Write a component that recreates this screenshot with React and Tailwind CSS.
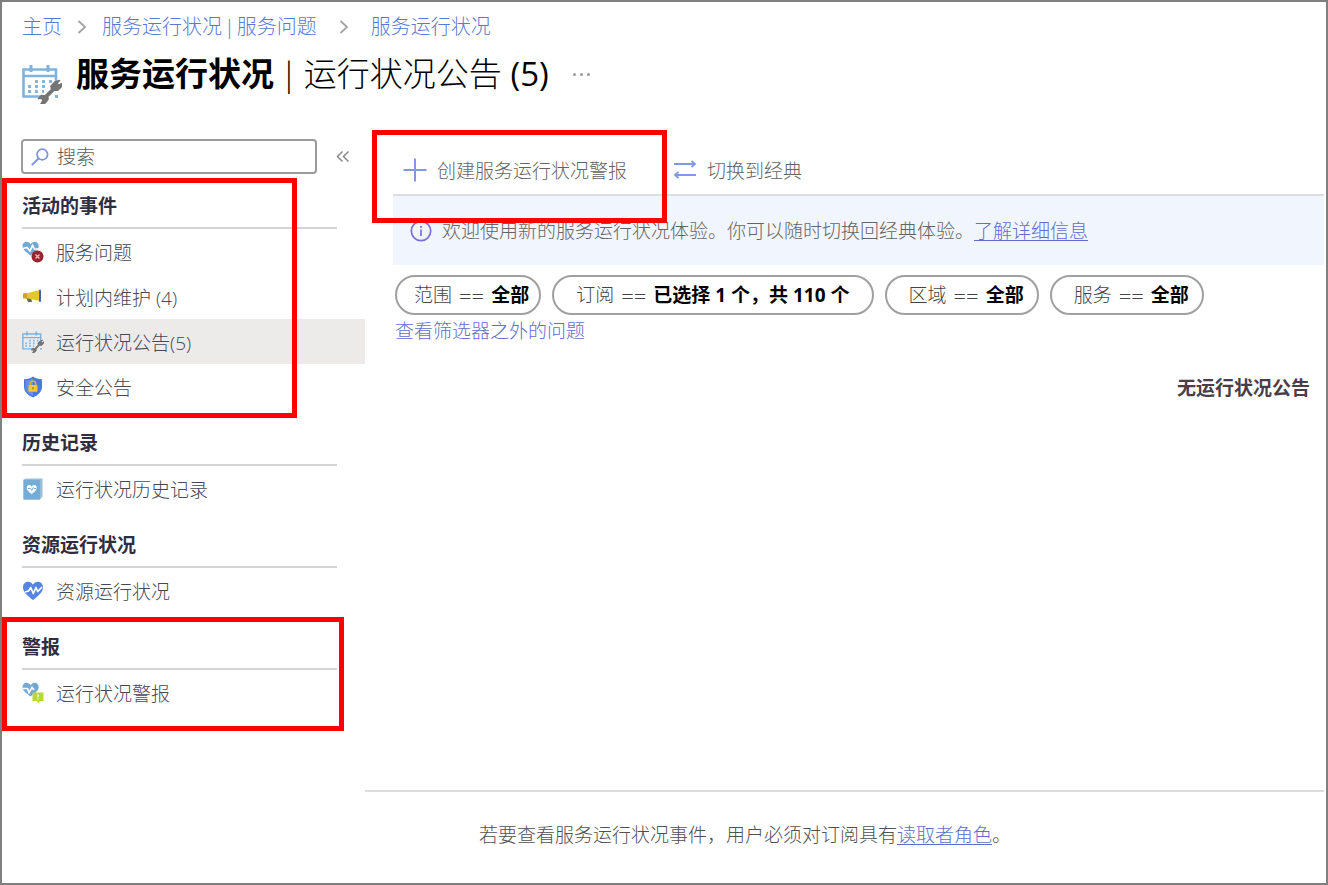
import React from 'react';

const CalendarWrench = ({ className }) => (
  <svg viewBox="0 0 40 40" className={className} fill="none" aria-hidden="true">
    <path d="M34 21V5.500H1.500V32.500H22" stroke="#7fb2dc" strokeWidth="2.600" />
    <path d="M1.500 12H34" stroke="#7fb2dc" strokeWidth="2.400" />
    <path d="M9 1v7M26 1v7" stroke="#7fb2dc" strokeWidth="3" />
    <path
      d="M13 17.500h3M20 17.500h3M27 17.500h3M6 22.500h3M13 22.500h3M20 22.500h3M6 27.500h3M13 27.500h3M20 27.500h2M33 32.500h3"
      stroke="#86b4da"
      strokeWidth="2.800"
    />
    <path
      d="M37.500 16.500l-4.500 1.500-4 4 .5 3.500-6.500 6.500-3.500-.5-3 3 3.500-.2 1 2.200-2 3.500 4-1 3-3.500-.2-3 6.500-6.500 3.500.2 3.500-3.500.8-3.200-3.600 1.700-1.800-1.700z"
      fill="#757575"
      stroke="#757575"
      strokeWidth="1.600"
      strokeLinejoin="round"
    />
  </svg>
);

const smallHeartPath =
  'M8.500 14.500C5 11.500.5 9 .5 5 .5 2.500 2.300.8 4.500.8c1.700 0 3.200.9 4.100 2.400C9.500 1.700 11 .8 12.700.8c2.200 0 4 1.700 4 4.200 0 4-4.700 6.500-8.200 9.500z';

const HeartError = () => (
  <svg viewBox="0 0 22 22" className="size-[22px]" fill="none" aria-hidden="true">
    <path d={smallHeartPath} fill="#72a9d3" />
    <path d="M1 7.500l4-1 3 3.500 2.500-5.500 2 3.500h4.500" stroke="#fff" strokeWidth="1.700" />
    <circle cx="15.500" cy="15.500" r="6" fill="#98252e" />
    <path d="M13.500 13.500l4 4M17.500 13.500l-4 4" stroke="#f0bfc3" strokeWidth="1.300" />
  </svg>
);

const Megaphone = () => (
  <svg viewBox="0 0 22 22" className="size-[22px]" fill="none" aria-hidden="true">
    <path d="M4 11h5l1 5H6z" fill="#6d6468" />
    <path d="M1 7.500l5-.5L17.500 4v11L6 12.500l-5-.3z" fill="#e5c62c" />
    <path d="M1 7.500l4-.4v5.300l-4-.2z" fill="#cda628" />
    <rect x="17" y="3.500" width="2" height="12.500" rx="1" fill="#3f62bd" />
  </svg>
);

const ShieldLock = () => (
  <svg viewBox="0 0 22 22" className="size-[22px]" fill="none" aria-hidden="true">
    <path d="M11 .5c2.500 2 5.500 2.600 9 2.700v7.300c0 5.500-4 8.800-9 11-5-2.200-9-5.500-9-11V3.200C5.500 3.100 8.500 2.500 11 .5z" fill="#4b78df" />
    <path d="M11 2v18c-4.500-2-7.500-5-7.500-9.500V4.500C6.500 4.400 9 3.700 11 2z" fill="#6690ea" />
    <path d="M8.300 9.500V7.700a2.700 2.700 0 015.400 0v1.800" stroke="#d6b338" strokeWidth="1.600" />
    <rect x="6.500" y="9" width="9" height="6.800" rx="1" fill="#f0c92e" />
    <path d="M11 11.200v2" stroke="#a5811e" strokeWidth="1.500" />
  </svg>
);

const HistoryBook = () => (
  <svg viewBox="0 0 22 22" className="size-[22px]" fill="none" aria-hidden="true">
    <path d="M1.500 1.500L4 .5h16.500v18L18 21.500H1.500z" fill="#9abdd6" />
    <path d="M1.500 2H18v19.500H1.500z" fill="#73add7" />
    <path d="M9.700 16C7 13.800 4.700 12.300 4.700 9.700c0-3 3.700-3.500 5-.9 1.300-2.600 5-2.100 5 .9 0 2.600-2.300 4.100-5 6.300z" fill="#fff" />
    <path d="M6 10.500h2.500l1.200 2 1.600-3 .8 1H14" stroke="#73add7" strokeWidth="1" />
  </svg>
);

const HeartPulse = () => (
  <svg viewBox="0 0 22 22" className="size-[22px]" fill="none" aria-hidden="true">
    <path
      d="M11 20C6.500 16.500 1 12.500 1 7.200 1 4 3.400 1.800 6.200 1.800c2 0 3.800 1.100 4.800 2.900 1-1.800 2.800-2.900 4.800-2.900C18.600 1.800 21 4 21 7.200 21 12.500 15.500 16.500 11 20z"
      fill="#5585e4"
    />
    <path d="M3 12l3.500-1 2.300-3.500 2.500 6 2.700-6 1.800 4L20 7" stroke="#fff" strokeWidth="1.700" strokeLinejoin="round" />
  </svg>
);

const HeartAlert = () => (
  <svg viewBox="0 0 22 22" className="size-[22px]" fill="none" aria-hidden="true">
    <path d={smallHeartPath} fill="#72a9d3" />
    <path d="M1 6.500l4.500 0 1.500 4 3-5 2 2.500" stroke="#fff" strokeWidth="1.700" />
    <path d="M10.500 10.500h11v8.500h-3.500l-1.500 2.500-1.500-2.500h-4.500z" fill="#b9d835" />
    <path d="M16 12.300v3M16 16.300v1.200" stroke="#f1f9cd" strokeWidth="1.500" />
  </svg>
);

const sections = [
  {
    title: '活动的事件',
    mark: '-top-[14px] -bottom-[9px] w-[295px]',
    items: [
      { label: '服务问题', icon: <HeartError /> },
      { label: '计划内维护 (4)', icon: <Megaphone /> },
      { label: '运行状况公告(5)', icon: <CalendarWrench className="size-[22px]" />, active: true },
      { label: '安全公告', icon: <ShieldLock /> },
    ],
  },
  { title: '历史记录', items: [{ label: '运行状况历史记录', icon: <HistoryBook /> }] },
  { title: '资源运行状况', items: [{ label: '资源运行状况', icon: <HeartPulse /> }] },
  {
    title: '警报',
    mark: '-top-4 -bottom-4 w-[342px]',
    items: [{ label: '运行状况警报', icon: <HeartAlert /> }],
  },
];

const filters = [
  { name: '范围', value: '全部', pad: 'pl-[17px] pr-[10px]' },
  { name: '订阅', value: '已选择 1 个，共 110 个', pad: 'pl-[22px] pr-[22px]' },
  { name: '区域', value: '全部', pad: 'pl-[22px] pr-[13px]' },
  { name: '服务', value: '全部', pad: 'pl-[22px] pr-[13px]' },
];

const Chevron = () => (
  <svg viewBox="0 0 10 16" className="h-4 w-[10px]" fill="none" aria-hidden="true">
    <path d="M1.500 2l6.500 6-6.500 6" stroke="#a3a3a3" strokeWidth="1.800" />
  </svg>
);

const Header = () => (
  <header className="px-5 pt-[11px] pb-[34px]">
    <nav className="flex items-center text-xl leading-7 font-light text-[#5878d2]">
      <a href="#home">主页</a>
      <span className="mx-[15px] flex"><Chevron /></span>
      <a href="#issues" className="flex gap-[2px]">
        <span>服务运行状况</span>
        <span>|</span>
        <span>服务问题</span>
      </a>
      <span className="mx-[22px] flex"><Chevron /></span>
      <a href="#health">服务运行状况</a>
    </nav>
    <div className="mt-[11px] flex h-11 items-center">
      <CalendarWrench className="mt-5 mr-[14px] size-10" />
      <h1 className="flex gap-[6px] text-[33px] leading-[44px] font-light text-black">
        <span className="font-bold">服务运行状况</span>
        <span>|</span>
        <span>运行状况公告 <span className="font-normal">(5)</span></span>
      </h1>
      <button type="button" aria-label="更多" className="ml-[24px] flex gap-1">
        <span className="size-[3px] rounded-full bg-[#9a9a9a]" />
        <span className="size-[3px] rounded-full bg-[#9a9a9a]" />
        <span className="size-[3px] rounded-full bg-[#9a9a9a]" />
      </button>
    </div>
  </header>
);

const Sidebar = () => (
  <aside className="w-[363px] shrink-0 pt-[9px]">
    <div className="flex items-center pl-[19px]">
      <label className="flex h-[35px] w-[296px] items-center gap-2 rounded-[4px] border-2 border-[#9c9c9c] bg-white pl-2">
        <svg viewBox="0 0 18 18" className="size-[18px] shrink-0" fill="none" aria-hidden="true">
          <circle cx="11.300" cy="6.500" r="5.300" stroke="#7b92dc" strokeWidth="1.700" />
          <path d="M7.500 10.500L.8 17.200" stroke="#7b92dc" strokeWidth="1.900" />
        </svg>
        <input type="text" aria-label="搜索" placeholder="搜索" className="min-w-0 flex-1 font-light outline-none placeholder:text-[#5c5c5c]" />
      </label>
      <button type="button" aria-label="折叠菜单" className="ml-[19px]">
        <svg viewBox="0 0 14 14" className="size-[14px]" fill="none" aria-hidden="true">
          <path d="M6.500 1.500L1.500 6.500l5 5M12.500 1.500L7.500 6.500l5 5" stroke="#8a8a8a" strokeWidth="1.500" />
        </svg>
      </button>
    </div>
    <nav className="mt-[18px] flex flex-col gap-5">
      {sections.map((section) => (
        <section key={section.title} className="relative">
          <h2 className="mr-7 ml-5 border-b-2 border-[#d4d4d4] pb-[7px] leading-7 font-bold text-[#2f2d40]">
            {section.title}
          </h2>
          {section.items.map((item) => (
            <a
              key={item.label}
              href="#item"
              className={`ml-[6px] flex h-[45px] items-center gap-3 pl-[14px] font-light text-[#484854] ${item.active ? 'bg-[#ecebea]' : ''}`}
            >
              {item.icon}
              <span className="pt-[2px]">{item.label}</span>
            </a>
          ))}
          {section.mark && (
            <div className={`pointer-events-none absolute left-0 border-5 border-[#ff0000] ${section.mark}`} />
          )}
        </section>
      ))}
    </nav>
  </aside>
);

const Content = () => (
  <main className="relative flex min-w-0 flex-1 flex-col pr-[2px]">
    <div className="ml-7 flex h-[66px] items-center border-b-2 border-[#dadee2] pt-[16px] pl-[10px] font-light text-[#646464]">
      <button type="button" className="flex items-center gap-[10px]">
        <svg viewBox="0 0 24 24" className="size-6" fill="none" aria-hidden="true">
          <path d="M12 .5v23M.5 12h23" stroke="#8299df" strokeWidth="2" />
        </svg>
        <span className="pt-[2px]">创建服务运行状况警报</span>
      </button>
      <button type="button" className="ml-[46px] flex items-center gap-[10px]">
        <svg viewBox="0 0 24 20" className="h-5 w-6" fill="none" aria-hidden="true">
          <path d="M1 4h21M18.500 1L22 4l-3.500 3M23 15H2M5.500 12L2 15l3.500 3" stroke="#7f9be0" strokeWidth="1.800" />
        </svg>
        <span className="pt-[2px]">切换到经典</span>
      </button>
    </div>
    <div className="ml-7 flex h-[69px] items-center gap-[10px] bg-[#f1f5fd] pl-[17px] font-light text-[#646464]">
      <svg viewBox="0 0 22 22" className="size-[22px] shrink-0" fill="none" aria-hidden="true">
        <circle cx="11" cy="11" r="9.700" stroke="#7a6fd8" strokeWidth="1.700" />
        <path d="M11 9.500v6.500M11 6v2" stroke="#7a6fd8" strokeWidth="1.700" />
      </svg>
      <p>
        欢迎使用新的服务运行状况体验。你可以随时切换回经典体验。
        <a href="#learn" className="text-[#626cd0] underline underline-offset-2">了解详细信息</a>
      </p>
    </div>
    <div className="mt-[10px] ml-[30px] flex flex-wrap gap-[11px]">
      {filters.map((filter) => (
        <button
          key={filter.name}
          type="button"
          className={`flex h-10 items-center gap-[7px] rounded-full border-2 border-[#a0a0a0] font-light whitespace-nowrap text-[#444444] ${filter.pad}`}
        >
          <span>{filter.name}</span>
          <span className="text-[22px]">==</span>
          <span className="font-bold text-black">{filter.value}</span>
        </button>
      ))}
    </div>
    <a href="#outside" className="mt-[2px] ml-[30px] self-start leading-7 font-light text-[#626cd0]">
      查看筛选器之外的问题
    </a>
    <p className="mt-[29px] mr-[14px] text-right leading-7 font-bold text-[#4a3e46]">无运行状况公告</p>
    <footer className="mt-auto border-t-2 border-[#dcdcdc] pt-[29px] pb-[34px] pl-[114px] leading-7 font-light text-[#505050]">
      若要查看服务运行状况事件，用户必须对订阅具有
      <a href="#reader" className="text-[#626cd0] underline underline-offset-2">读取者角色</a>。
    </footer>
    <div className="pointer-events-none absolute top-0 left-[7px] h-[93px] w-[295px] border-5 border-[#ff0000]" />
  </main>
);

export default function App() {
  return (
    <div
      lang="zh-CN"
      className="flex min-h-screen flex-col border-2 border-[#7f7f7f] bg-white font-['Open_Sans','Noto_Sans_CJK_SC',sans-serif] text-[19px] leading-7"
    >
      <Header />
      <div className="flex flex-1">
        <Sidebar />
        <Content />
      </div>
    </div>
  );
}
